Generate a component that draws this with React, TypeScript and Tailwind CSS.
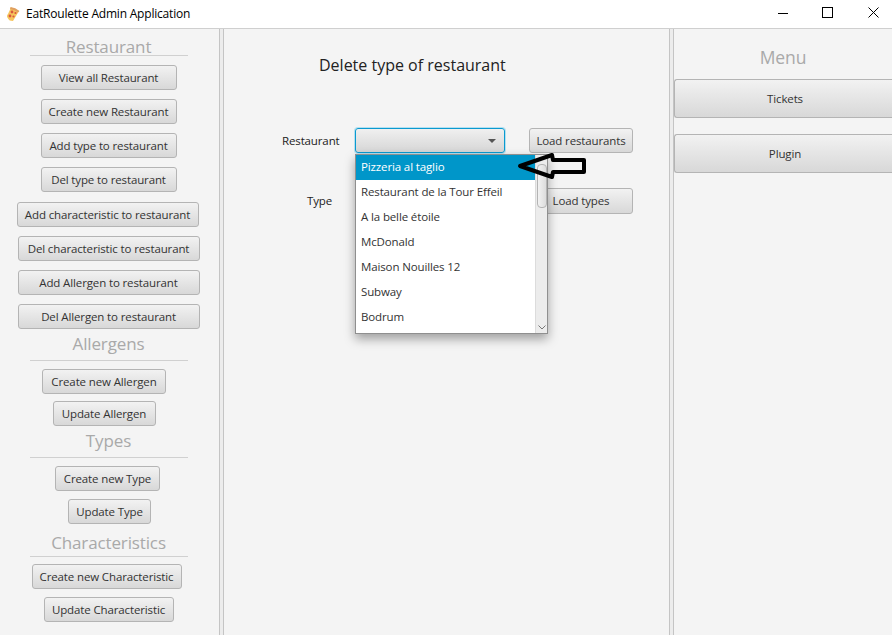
const btn =
  "flex items-center justify-center h-[25px] shrink-0 rounded-[3px] border border-[#b4b4b4] bg-gradient-to-b from-[#f2f2f2] to-[#d8d8d8] text-[11.5px] text-[#333] whitespace-nowrap tracking-[-0.13px]";
const heading = "text-[17px] leading-[24px] text-[#a9a9a9] text-center";

function Btn({ w, mt, children }: { w: string; mt: string; children: string }) {
  return <div className={`${btn} ${w} ${mt}`}>{children}</div>;
}

function Section({ title, mt, lineMt }: { title: string; mt: string; lineMt: string }) {
  return (
    <div className={`flex flex-col items-center w-[158px] ${mt}`}>
      <div className={heading}>{title}</div>
      <div className={`h-px w-full bg-[#d0d0d0] ${lineMt}`} />
    </div>
  );
}

function Pizza() {
  return (
    <svg width="16" height="16" viewBox="0 0 16 16">
      <path d="M6 1.5 L14 5 L8 15 Q4 15 3 12.5 Q1 10 3 8 Z" fill="#f6c45c" />
      <path d="M5.5 1 Q10.5 1.5 14.5 5 L13 6.5 Q9.5 3.5 5 3 Z" fill="#e0a060" />
      <circle cx="7" cy="6" r="1.4" fill="#d9573f" />
      <circle cx="10.5" cy="7" r="1.1" fill="#d9573f" />
      <circle cx="5" cy="10" r="1.4" fill="#d9573f" />
      <circle cx="8.5" cy="10.5" r="1.1" fill="#d9573f" />
    </svg>
  );
}

const items = [
  "Pizzeria al taglio",
  "Restaurant de la Tour Effeil",
  "A la belle étoile",
  "McDonald",
  "Maison Nouilles 12",
  "Subway",
  "Bodrum",
];

export default function App() {
  return (
    <div className="w-[892px] h-[635px] overflow-hidden flex flex-col bg-[#f4f4f4] font-['Open_Sans',sans-serif] text-[11.5px] tracking-[-0.13px] text-[#333]">
      <header className="h-[29px] shrink-0 bg-white border-b border-[#cfcfcf] flex items-center">
        <div className="ml-[5px] w-[16px]"><Pizza /></div>
        <div className="ml-[5px] text-[12px] tracking-[-0.2px] text-black">EatRoulette Admin Application</div>
        <div className="ml-auto flex items-center text-black -mt-[2px]">
          <svg width="12" height="12" viewBox="0 0 12 12" className="mr-[33px]"><path d="M1 6.5H11" stroke="#000" /></svg>
          <svg width="12" height="12" viewBox="0 0 12 12" className="mr-[34px]"><rect x="0.5" y="0.5" width="10" height="10" fill="none" stroke="#000" /></svg>
          <svg width="12" height="12" viewBox="0 0 12 12" className="mr-[12px]"><path d="M0.5 0.5L10.5 10.5M10.5 0.5L0.5 10.5" stroke="#000" /></svg>
        </div>
      </header>

      <div className="flex-1 flex min-h-0">
        <aside className="w-[219px] shrink-0 flex flex-col items-center pr-[2px]">
          <Section title="Restaurant" mt="mt-[6px]" lineMt="-mt-[4px]" />
          <Btn w="w-[136px]" mt="mt-[9px]">View all Restaurant</Btn>
          <Btn w="w-[136px]" mt="mt-[9px]">Create new Restaurant</Btn>
          <Btn w="w-[136px]" mt="mt-[9px]">Add type to restaurant</Btn>
          <Btn w="w-[136px]" mt="mt-[9px]">Del type to restaurant</Btn>
          <Btn w="w-[182px] mr-[2px]" mt="mt-[10px]">Add characteristic to restaurant</Btn>
          <Btn w="w-[182px]" mt="mt-[9px]">Del characteristic to restaurant</Btn>
          <Btn w="w-[182px]" mt="mt-[9px]">Add Allergen to restaurant</Btn>
          <Btn w="w-[182px]" mt="mt-[9px]">Del Allergen to restaurant</Btn>
          <Section title="Allergens" mt="mt-[3px]" lineMt="mt-[4px]" />
          <Btn w="w-[124px] mr-[9px]" mt="mt-[8px]">Create new Allergen</Btn>
          <Btn w="w-[103px] mr-[9px]" mt="mt-[7px]">Update Allergen</Btn>
          <Section title="Types" mt="mt-[3px]" lineMt="mt-[4px]" />
          <Btn w="w-[105px] mr-[2px]" mt="mt-[8px]">Create new Type</Btn>
          <Btn w="w-[83px] ml-[2px]" mt="mt-[8px]">Update Type</Btn>
          <Section title="Characteristics" mt="mt-[7px]" lineMt="mt-[1px]" />
          <Btn w="w-[150px] mr-[4px]" mt="mt-[7px]">Create new Characteristic</Btn>
          <Btn w="w-[130px]" mt="mt-[8px]">Update Characteristic</Btn>
        </aside>

        <div className="w-[5px] shrink-0 border-x border-[#c4c4c4] bg-[#ececec]" />

        <main className="relative w-[445px] shrink-0 pl-[58px]">
          <div className="ml-[37px] mt-[25px] text-[16px] leading-[22px] text-[#222] tracking-normal">Delete type of restaurant</div>
          <div className="flex items-center mt-[52px] h-[25px]">
            <div className="w-[73px] text-[#222]">Restaurant</div>
            <div className="w-[150px] h-[25px] rounded-[3px] border border-[#0a9ad0] shadow-[0_0_0_1px_#b5e0f0] bg-gradient-to-b from-[#f0f0f0] to-[#d6d6d6] flex items-center justify-end pr-[8px]">
              <svg width="8" height="4" viewBox="0 0 8 4"><path d="M0 0H8L4 4Z" fill="#555" /></svg>
            </div>
            <div className={`${btn} w-[104px] ml-[24px]`}>Load restaurants</div>
          </div>
          <div className="flex items-center mt-[35px] h-[26px]">
            <div className="w-[247px] pl-[25px] text-[#222]">Type</div>
            <div className={`${btn} w-[104px] h-[26px]`}>Load types</div>
          </div>

          {/* dropdown popup */}
          <div className="absolute left-[131px] top-[125px] w-[193px] h-[180px] bg-white border border-[#8f8f8f] shadow-[0_5px_10px_rgba(0,0,0,0.35)] flex">
            <div className="flex-1 min-w-0">
              {items.map((t, i) => (
                <div
                  key={t}
                  className={`h-[25px] flex items-center pl-[5px] pb-[1px] ${i === 0 ? "bg-[#0096c9] text-white" : "text-[#333]"}`}
                >
                  {t}
                </div>
              ))}
            </div>
            <div className="w-[12px] shrink-0 bg-[#ececec] border-l border-[#dcdcdc] flex flex-col items-center">
              <div className="mt-[9px] w-[10px] h-[44px] rounded-[4px] border border-[#b4b4b4] bg-gradient-to-r from-[#f2f2f2] to-[#dcdcdc]" />
              <svg width="8" height="5" viewBox="0 0 8 5" className="mt-auto mb-[3px]"><path d="M0.5 0.5L4 4L7.5 0.5" fill="none" stroke="#777" /></svg>
            </div>
          </div>

          {/* hand-drawn arrow */}
          <svg width="72" height="28" viewBox="0 0 72 28" className="absolute left-[292px] top-[123px]">
            <path
              d="M4 14 L36 3 L37 8 L68 8 L68 20 L37 20 L36 25 Z"
              fill="none"
              stroke="#000"
              strokeWidth="4"
              strokeLinejoin="round"
            />
          </svg>
        </main>

        <div className="w-[5px] shrink-0 border-x border-[#c4c4c4] bg-[#ececec]" />

        <aside className="flex-1 min-w-0 flex flex-col items-center">
          <div className="mt-[16px] h-[24px] text-[17.5px] leading-[24px] text-[#a9a9a9]">Menu</div>
          <div className={`${btn} w-full mt-[10px] h-[39px]! rounded-r-none border-r-0 pl-[3px]`}>Tickets</div>
          <div className={`${btn} w-full mt-[16px] h-[39px]! rounded-r-none border-r-0 pl-[3px]`}>Plugin</div>
        </aside>
      </div>
    </div>
  );
}
